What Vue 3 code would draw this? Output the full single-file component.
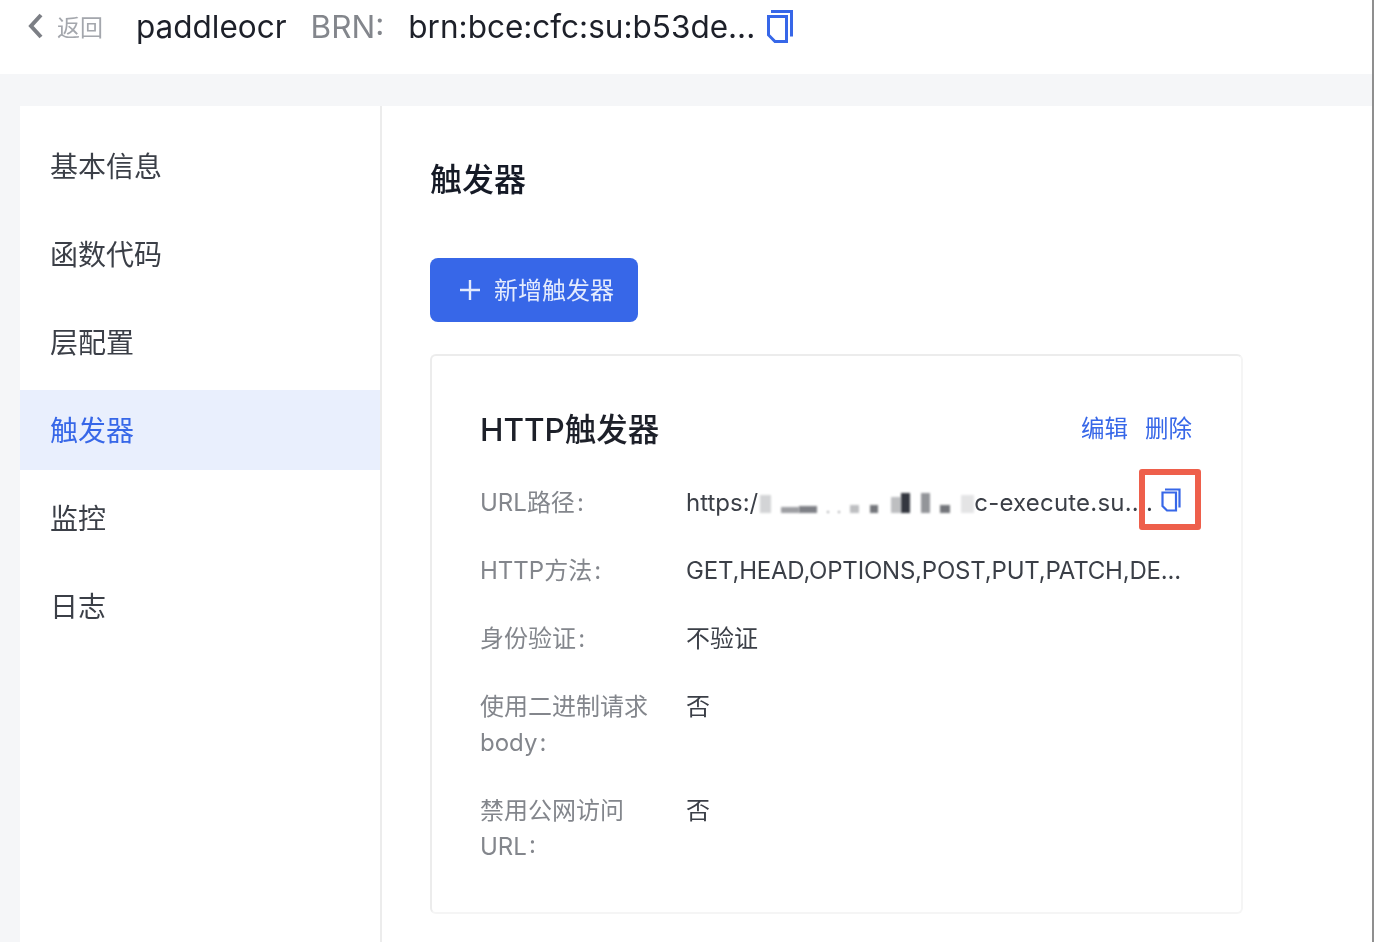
<script setup>
const menu = ['基本信息', '函数代码', '层配置', '触发器', '监控', '日志']
const activeItem = '触发器'
const rows = [
  { label: 'HTTP方法\u200a:', value: 'GET,HEAD,OPTIONS,POST,PUT,PATCH,DE...', tight: true },
  { label: '身份验证\u200a:', value: '不验证' },
  { label: '使用二进制请求 body\u200a:', value: '否' },
  { label: '禁用公网访问 URL\u200a:', value: '否' }
]
const smudges = [
  { ml: 2, w: 11, h: 18, o: 0.2 },
  { ml: 10, w: 18, h: 6, o: 0.45 },
  { ml: 0, w: 18, h: 7, o: 0.6 },
  { ml: 10, w: 2, h: 2, o: 0.4 },
  { ml: 9, w: 2, h: 2, o: 0.4 },
  { ml: 10, w: 9, h: 8, o: 0.3 },
  { ml: 11, w: 8, h: 8, o: 0.65 },
  { ml: 13, w: 10, h: 16, o: 0.3 },
  { ml: 0, w: 9, h: 20, o: 0.95 },
  { ml: 11, w: 9, h: 20, o: 0.5 },
  { ml: 10, w: 10, h: 8, o: 0.65 },
  { ml: 11, w: 13, h: 18, o: 0.12 }
]
</script>

<template>
  <div class="page">
    <header class="top">
      <svg class="back" viewBox="0 0 16 28" width="16" height="28">
        <path d="M13 3 3 14l10 11" fill="none" stroke="#7c7f85" stroke-width="4" />
      </svg>
      <span class="back-text">返回</span>
      <span class="name">paddleocr</span>
      <span class="brn-label">BRN:</span>
      <span class="brn">brn:bce:cfc:su:b53de...</span>
      <svg class="copy-big" viewBox="0 0 26 33" width="26" height="33">
        <path d="M4 1.500h20.500v25" fill="none" stroke="#3767e8" stroke-width="3" />
        <path d="M1.500 6.500h18v25H8l-6.500-6.500z" fill="#fff" stroke="#3767e8" stroke-width="3" />
      </svg>
    </header>
    <div class="content">
      <nav class="side">
        <div v-for="m in menu" :key="m" class="item" :class="{ active: m === activeItem }">{{ m }}</div>
      </nav>
      <main class="main">
        <h1 class="title">触发器</h1>
        <button class="add">
          <svg viewBox="0 0 20 20" width="20" height="20">
            <path d="M10 0v20M0 10h20" stroke="#e4ebfd" stroke-width="2.400" />
          </svg>
          <span class="add-text">新增触发器</span>
        </button>
        <section class="card">
          <div class="card-head">
            <h2>HTTP触发器</h2>
            <div class="actions"><a>编辑</a><a>删除</a></div>
          </div>
          <div class="row">
            <div class="label">URL路径&#8202;:</div>
            <div class="value url">
              <span>https:/</span>
              <span class="redact">
                <i v-for="(s, i) in smudges" :key="i" class="smudge"
                   :style="{ width: s.w + 'px', height: s.h + 'px', opacity: s.o, marginLeft: s.ml + 'px' }"></i>
              </span>
              <span class="url-end">c-execute.su....</span>
              <span class="highlight">
                <svg viewBox="0 0 20 24" width="20" height="24">
                  <path d="M4 1.500h14.500v18" fill="none" stroke="#3767e8" stroke-width="2.200" />
                  <path d="M1.500 4.500h13.500v18H6l-4.500-4.500z" fill="#fff" stroke="#3767e8" stroke-width="2.200" />
                </svg>
              </span>
            </div>
          </div>
          <div v-for="r in rows" :key="r.label" class="row">
            <div class="label">{{ r.label }}</div>
            <div class="value" :class="{ tight: r.tight }">{{ r.value }}</div>
          </div>
        </section>
      </main>
    </div>
  </div>
</template>

<style scoped>
.page {
  width: 1374px;
  height: 942px;
  overflow: hidden;
  box-sizing: border-box;
  border-right: 2px solid #8f8f8f;
  background: #f5f6f8;
  font-family: Inter, "Noto Sans CJK SC", sans-serif;
  color: #151a26;
  filter: blur(0.35px);
}
.top {
  height: 74px;
  background: #fff;
  display: flex;
  align-items: center;
  padding: 0 0 22px 28px;
  box-sizing: border-box;
}
.back { flex: none; }
.back-text { margin-left: 13px; font-size: 23px; color: #a4a7ad; }
.name { margin-left: 33px; font-size: 31.500px; color: #1d2029; }
.brn-label { margin-left: 24px; font-size: 31.500px; color: #83868c; }
.brn { margin-left: 24px; font-size: 31.500px; color: #1d2029; }
.copy-big { margin-left: 12px; flex: none; }
.content {
  margin-top: 32px;
  margin-left: 20px;
  background: #fff;
  height: 836px;
  display: flex;
}
.side {
  width: 360px;
  flex: none;
  padding-top: 20px;
  border-right: 2px solid #ececec;
}
.item {
  height: 80px;
  margin-bottom: 8px;
  padding-left: 30px;
  line-height: 82px;
  font-size: 28px;
  color: #3b3f47;
}
.item.active { background: #e9effd; color: #3767e8; }
.main { padding-left: 48px; flex: 1; }
.title {
  margin: 54px 0 0;
  font-size: 32px;
  line-height: 40px;
  font-weight: 500;
  color: #151a26;
}
.add {
  margin-top: 58px;
  width: 208px;
  height: 64px;
  border: 0;
  border-radius: 8px;
  background: #3767e8;
  color: #e4ebfd;
  font: inherit;
  font-size: 24px;
  display: flex;
  align-items: center;
  padding: 0 0 0 30px;
  gap: 14px;
}
.add-text { margin-bottom: 3px; }
.card {
  margin-top: 32px;
  width: 813px;
  height: 560px;
  box-sizing: border-box;
  border: 2px solid #ececec;
  border-right-color: #f5f5f5;
  border-bottom-color: #f5f5f5;
  border-radius: 6px;
  padding: 49px 48px 0;
}
.card-head {
  display: flex;
  justify-content: space-between;
  align-items: center;
  height: 44px;
  margin-bottom: 36px;
  padding-right: 1px;
}
.card-head h2 { margin: 0; font-size: 31.500px; font-weight: 500; color: #1d2029; }
.actions { display: flex; gap: 17px; font-size: 23.500px; color: #3767e8; }
.row { display: flex; margin-bottom: 32px; font-size: 24px; line-height: 36px; }
.label { width: 206px; flex: none; padding-right: 30px; box-sizing: border-box; color: #83868c; }
.value { color: #3b3f47; white-space: nowrap; }
.tight { letter-spacing: -0.2px; }
.url { display: flex; align-items: center; position: relative; }
.url-end { letter-spacing: 0.2px; }
.redact { display: flex; align-items: flex-end; width: 216px; height: 20px; flex: none; }
.smudge { display: block; background: #2a2d36; filter: blur(1px); flex: none; }
.highlight {
  position: absolute;
  left: 453px;
  top: -16px;
  width: 62px;
  height: 61px;
  box-sizing: border-box;
  border: 6px solid #ee5f4b;
  border-radius: 3px;
  display: flex;
  align-items: center;
  justify-content: center;
  padding-left: 1px;
}
</style>
